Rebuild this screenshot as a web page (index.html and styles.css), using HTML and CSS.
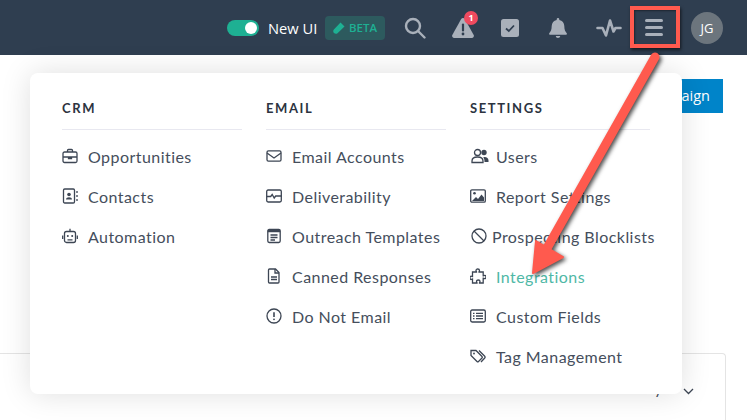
FILE: index.html
```html
<!DOCTYPE html>
<html lang="en">
<head>
    <meta charset="UTF-8">
    <title>Menu</title>
    <link rel="stylesheet" href="styles.css">
</head>
<body>
    <header class="topbar">
        <span class="toggle"><span class="toggle-knob"></span></span>
        <span class="toggle-label">New UI</span>
        <span class="beta">
            <svg width="12" height="12" viewBox="0 0 12 12"><path d="M7.500 .5 11.500 4.500 4.500 11.300C3.500 12.200 1.800 11.900 1 11.100 .1 10.200-.1 8.500.9 7.400Z" fill="#1eb093"/></svg>
            BETA
        </span>
        <svg class="nav-icon search" width="22" height="22" viewBox="0 0 22 22" fill="none" stroke="#a9b0ba" stroke-width="2.400"><circle cx="9" cy="9" r="7"/><path d="m14 14 6.500 6.500" stroke-linecap="round"/></svg>
        <span class="alert">
            <svg width="22" height="20" viewBox="0 0 22 20"><path d="M11 0c.8 0 1.400.4 1.800 1.100l8.900 15.800c.7 1.300-.2 3.100-1.800 3.100H2.100C.5 20-.4 18.200.3 16.900L9.200 1.100C9.600.4 10.200 0 11 0Z" fill="#a9b0ba"/><path d="M11 6.500v6" stroke="#2f3e50" stroke-width="2.200" stroke-linecap="round"/><circle cx="11" cy="16" r="1.400" fill="#2f3e50"/></svg>
            <span class="alert-count">1</span>
        </span>
        <svg class="nav-icon check" width="18" height="18" viewBox="0 0 18 18"><rect width="18" height="18" rx="2.500" fill="#a9b0ba"/><path d="m5 9.500 2.800 2.500L13 6.500" fill="none" stroke="#2f3e50" stroke-width="1.800"/></svg>
        <svg class="nav-icon bell" width="18" height="20" viewBox="0 0 18 20"><path d="M9 0c.8 0 1.300.6 1.300 1.300v.6c3 .6 5 3 5 6 0 4 1 5.500 2.300 7 .6.700.2 1.800-.8 1.800H1.200c-1 0-1.400-1.100-.8-1.800 1.300-1.500 2.300-3 2.300-7 0-3 2-5.400 5-6v-.6C7.700.6 8.200 0 9 0Z" fill="#a9b0ba"/><path d="M6.800 18h4.400c0 1.200-1 2-2.200 2s-2.200-.8-2.200-2Z" fill="#a9b0ba"/></svg>
        <svg class="nav-icon pulse" width="26" height="18" viewBox="0 0 26 18" fill="none" stroke="#a9b0ba" stroke-width="2.600" stroke-linecap="round" stroke-linejoin="round"><path d="M1.500 9h5l3.500 7.500 4-15 3.500 11 2-3.500h5"/></svg>
        <span class="burger"><span></span><span></span><span></span></span>
        <span class="avatar">JG</span>
    </header>

    <main class="content">
        <div class="toolbar">
            <a class="btn-campaign">New Campaign</a>
        </div>
        <section class="card">
            <span class="card-filter">Activity</span>
            <svg width="11" height="7" viewBox="0 0 11 7" fill="none" stroke="#3d4654" stroke-width="1.300"><path d="m1 1 4.500 4.500L10 1"/></svg>
        </section>
    </main>

    <nav class="menu">
        <div class="menu-col">
            <h3>CRM</h3>
            <ul>
                <li><svg class="item-icon" viewBox="0 0 16 16"><rect x="1" y="4" width="14" height="10.500" rx="1.500"/><path d="M5.500 4V2.500c0-.5.300-1 1-1h3c.7 0 1 .5 1 1V4M1 9h14M6.500 9v1.500h3V9"/></svg>Opportunities</li>
                <li><svg class="item-icon" viewBox="0 0 16 16"><rect x="1.500" y="1" width="11" height="14" rx="1.200"/><circle cx="7" cy="6.500" r="1.800" class="solid"/><path d="M4 11.500c0-3 6-3 6 0Z" class="solid"/><path d="M15 3v2M15 7v2M15 11v2"/></svg>Contacts</li>
                <li><svg class="item-icon" viewBox="0 0 16 16"><rect x="2.500" y="3.500" width="11" height="11" rx="2"/><path d="M8 3.500V.8M5.500 11.800h5M.7 7.500v3.500M15.300 7.500v3.500"/><circle cx="5.800" cy="8" r="1" class="solid"/><circle cx="10.200" cy="8" r="1" class="solid"/></svg>Automation</li>
            </ul>
        </div>
        <div class="menu-col">
            <h3>EMAIL</h3>
            <ul>
                <li><svg class="item-icon" viewBox="0 0 16 16"><rect x="1" y="2.800" width="14" height="10.400" rx="1.400"/><path d="m1 5 7 5 7-5"/></svg>Email Accounts</li>
                <li><svg class="item-icon" viewBox="0 0 16 16"><rect x=".7" y="2" width="14.600" height="12" rx="1.400"/><path d="M.7 8.500h4l1.500-2 2 3.500 1.500-2h5.600"/></svg>Deliverability</li>
                <li><svg class="item-icon" viewBox="0 0 16 16"><rect x="1.800" y="1.500" width="12.400" height="13" rx="1.400"/><path d="M1.800 3h12.400" stroke-width="2.500"/><path d="M4.500 7h7M4.500 9.500h7M4.500 12h4.500"/></svg>Outreach Templates</li>
                <li><svg class="item-icon" viewBox="0 0 16 16"><path d="M3.500 1h6l3.500 3.500V14c0 .6-.4 1-1 1H3.500c-.6 0-1-.4-1-1V2c0-.6.400-1 1-1Z"/><path d="M9 1v4h4M5 9h6M5 11.500h6"/></svg>Canned Responses</li>
                <li><svg class="item-icon" viewBox="0 0 16 16"><circle cx="8" cy="8" r="7"/><path d="M8 4.200v4.800" stroke-width="1.600"/><circle cx="8" cy="11.300" r=".9" class="solid"/></svg>Do Not Email</li>
            </ul>
        </div>
        <div class="menu-col">
            <h3>SETTINGS</h3>
            <ul>
                <li><svg class="item-icon wide" viewBox="0 0 18 16"><circle cx="6.500" cy="4.500" r="3"/><path d="M1 14.500v-1.500c0-2.500 2-4 5.500-4s5.500 1.500 5.500 4v1.500Z"/><circle cx="13" cy="4.500" r="2.700" class="solid"/><path d="M13.500 9c2.500 0 4 1.300 4 3.500v1.500h-4c0-2-.3-3.500-1.300-4.700Z" class="solid"/></svg>Users</li>
                <li><svg class="item-icon" viewBox="0 0 16 16"><rect x=".7" y="1.800" width="14.600" height="12.400" rx="1.200"/><circle cx="4.500" cy="5.200" r="1.300" class="solid"/><path d="m2 13 4-4 2 2 3.500-4.500L14 9.500V13Z" class="solid"/></svg>Report Settings</li>
                <li class="tight"><svg class="item-icon wide" viewBox="0 0 16 16"><circle cx="8" cy="8" r="7"/><path d="m3 3 10 10"/></svg>Prospecting Blocklists</li>
                <li class="current"><svg class="item-icon" viewBox="0 0 16 16"><path d="M6 2.500C6 1.500 6.700 1 7.700 1s1.800.5 1.800 1.500c0 .7-.5 1-.5 1.500h4.200v3.800c.5 0 1-.5 1.500-.5.900 0 1.300.8 1.300 1.700s-.4 1.700-1.300 1.700c-.5 0-1-.5-1.500-.5V15H9.500c0-.6.500-1 .5-1.700 0-.9-.9-1.300-1.800-1.300s-1.700.4-1.700 1.300c0 .7.500 1.100.5 1.700H2.500v-4c-.5 0-1 .5-1.500.5C.4 11.500 0 10.700 0 9.800s.4-1.700 1-1.700c.5 0 1 .4 1.500.4V4h4C6.500 3.500 6 3.200 6 2.500Z"/></svg>Integrations</li>
                <li><svg class="item-icon" viewBox="0 0 16 16"><rect x=".7" y="2" width="14.600" height="12" rx="1.400"/><path d="M3 5.300h1.500M3 8h1.500M3 10.700h1.500M6 5.300h7M6 8h7M6 10.700h7"/></svg>Custom Fields</li>
                <li><svg class="item-icon" viewBox="0 0 16 16"><path d="M1 2.500h5l6 6c.5.500.5 1 0 1.500l-3.500 3.500c-.5.500-1 .5-1.500 0l-6-6Z"/><path d="m9 2.500 5.500 5.500c.8.800.8 1.500 0 2.300L11 14"/><circle cx="4" cy="5.500" r=".9" class="solid"/></svg>Tag Management</li>
            </ul>
        </div>
    </nav>

    <div class="highlight"></div>
    <svg class="arrow" width="747" height="420" viewBox="0 0 747 420">
        <path d="M655 57 546 250" stroke="#ff5a4e" stroke-width="9" stroke-linecap="round"/>
        <path d="M533 273 536 241 563 257Z" fill="#ff5a4e" stroke="#ff5a4e" stroke-width="2" stroke-linejoin="round"/>
    </svg>
</body>
</html>
```

FILE: styles.css
```css
* {
    margin: 0;
    padding: 0;
    box-sizing: border-box;
}

body {
    font-family: "Lato", sans-serif;
    background: white;
    height: 420px;
    overflow: hidden;
    color: #454e5c;
}

.topbar {
    height: 55px;
    background: #2f3e50;
    display: flex;
    align-items: center;
    padding-right: 24px;
    justify-content: flex-end;
    font-family: "Open Sans", sans-serif;
}

.toggle {
    width: 32px;
    height: 16px;
    border-radius: 8px;
    background: #1eb093;
    display: flex;
    justify-content: flex-end;
    align-items: center;
    padding-right: 2px;
}

.toggle-knob {
    width: 12px;
    height: 12px;
    border-radius: 50%;
    background: white;
}

.toggle-label {
    color: white;
    font-size: 14.700px;
    margin-left: 9px;
    width: 49px;
    white-space: nowrap;
}

.beta {
    margin-left: 8px;
    width: 60px;
    height: 24px;
    border-radius: 4px;
    background: #2d5a5e;
    color: #1eb093;
    font-size: 11.500px;
    font-weight: 600;
    display: flex;
    align-items: center;
    justify-content: center;
    gap: 4px;
}

.nav-icon {
    flex-shrink: 0;
}

.search {
    margin-left: 19px;
}

.alert {
    position: relative;
    margin-left: 26px;
    width: 22px;
    height: 20px;
}

.alert-count {
    position: absolute;
    top: -7px;
    left: 12px;
    width: 14px;
    height: 14px;
    border-radius: 50%;
    background: #ef4a5f;
    color: white;
    font-size: 9px;
    font-weight: 700;
    line-height: 14px;
    text-align: center;
}

.check {
    margin-left: 27px;
}

.bell {
    margin-left: 30px;
}

.pulse {
    margin-left: 29px;
}

.burger {
    margin-left: 23px;
    width: 18px;
    display: flex;
    flex-direction: column;
    gap: 4px;
}

.burger span {
    height: 3px;
    border-radius: 2px;
    background: #a9b0ba;
}

.avatar {
    margin-left: 28px;
    width: 32px;
    height: 32px;
    border-radius: 50%;
    background: #6c757d;
    color: white;
    font-size: 13px;
    display: flex;
    align-items: center;
    justify-content: center;
}

.content {
    padding: 24px 21px 0 0;
}

.toolbar {
    display: flex;
    justify-content: flex-end;
    margin-right: 3px;
}

.btn-campaign {
    background: #0084c9;
    color: white;
    font-family: "Open Sans", sans-serif;
    font-size: 14.500px;
    height: 34px;
    line-height: 34px;
    padding: 0 13px;
}

.card {
    margin-top: 240px;
    height: 67px;
    border: 1px solid #e4e4e4;
    border-left: none;
    border-bottom: none;
    border-radius: 0 4px 0 0;
    display: flex;
    justify-content: flex-end;
    align-items: flex-start;
    gap: 21px;
    padding: 25px 31px 0 0;
    font-size: 15px;
}

.card svg {
    margin-top: 9px;
}

/* dropdown panel sits over the page */
.menu {
    position: absolute;
    top: 73px;
    left: 30px;
    width: 652px;
    height: 321px;
    background: white;
    border-radius: 8px;
    box-shadow: 0 0 30px rgba(0, 0, 0, 0.13);
    padding: 25px 32px;
    display: grid;
    grid-template-columns: repeat(3, 180px);
    gap: 24px;
}

.menu h3 {
    font-size: 13px;
    font-weight: 700;
    letter-spacing: 1.600px;
    color: #2c3340;
    height: 32px;
    line-height: 20px;
    border-bottom: 1px solid #e8e8f0;
}

.menu ul {
    list-style: none;
    padding-top: 6px;
}

.menu li {
    height: 40px;
    display: flex;
    align-items: center;
    font-size: 16px;
    letter-spacing: 0.450px;
    white-space: nowrap;
}

.menu li.current {
    color: #4fb8a6;
}

.item-icon {
    width: 16px;
    height: 16px;
    margin-right: 10px;
    flex-shrink: 0;
    fill: none;
    stroke: #3d4654;
    stroke-width: 1.300;
}

.item-icon.wide {
    width: 20px;
    margin-right: 6px;
}

.tight .item-icon.wide {
    width: 18px;
    margin-right: 4px;
}

.item-icon .solid {
    fill: #3d4654;
    stroke: none;
}

.highlight {
    position: absolute;
    top: 6px;
    left: 630px;
    width: 50px;
    height: 42px;
    border: 4px solid #ff5a4e;
    box-shadow: 1px 2px 3px rgba(0, 0, 0, 0.6), inset 1px 1px 2px rgba(0, 0, 0, 0.4);
}

.arrow {
    position: absolute;
    top: 0;
    left: 0;
    filter: drop-shadow(2px 2px 2px rgba(0, 0, 0, 0.7));
}
```
